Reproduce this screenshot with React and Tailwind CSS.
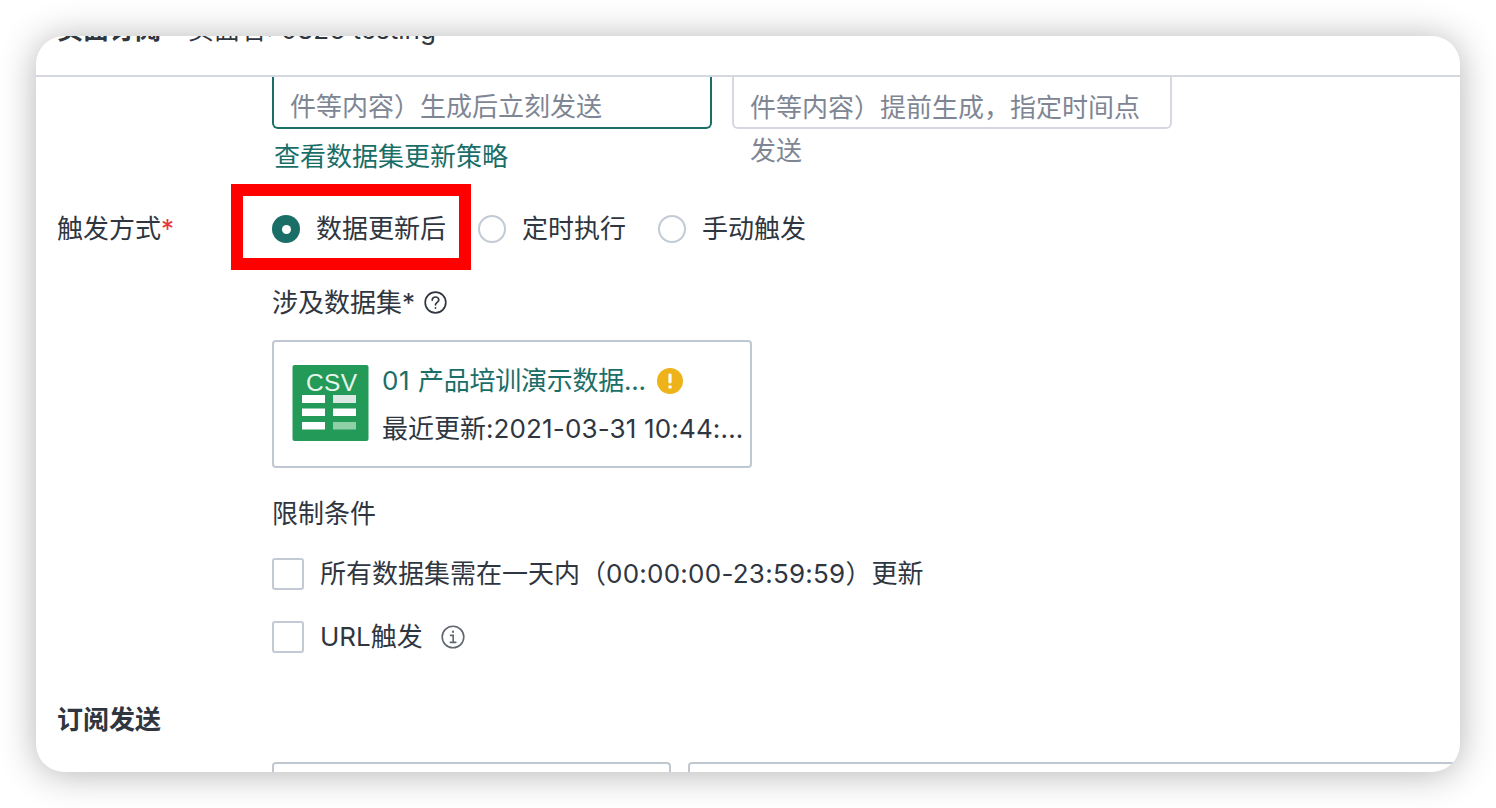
function Radio({ checked, children }) {
  return (
    <label className="flex items-center gap-[16px]">
      {checked ? (
        <span className="flex h-[28px] w-[28px] items-center justify-center rounded-full bg-[#1a6e68]">
          <span className="h-[9px] w-[9px] rounded-full bg-white" />
        </span>
      ) : (
        <span className="h-[28px] w-[28px] rounded-full border-2 border-[#c2cad5] bg-white" />
      )}
      <span className="mr-[1px]">{children}</span>
    </label>
  );
}

function Checkbox({ children }) {
  return (
    <label className="flex items-center gap-[16px]">
      <span className="h-[32px] w-[32px] rounded-[3px] border-2 border-[#c2cad5] bg-white" />
      {children}
    </label>
  );
}

function CsvIcon() {
  return (
    <svg width="77" height="77" viewBox="0 0 77 77" className="shrink-0">
      <rect x="0.5" y="0" width="76" height="76" rx="2" fill="#239a57" />
      <text x="14" y="26" fill="#e6f5ec" fontSize="24.5" fontFamily="Liberation Sans, sans-serif" textLength="51">CSV</text>
      <rect x="10" y="30" width="23" height="8" fill="#fff" />
      <rect x="41" y="30" width="23" height="8" fill="#dce8e3" />
      <rect x="10" y="43.5" width="23" height="7.5" fill="#fff" />
      <rect x="41" y="43.5" width="23" height="7.5" fill="#fff" />
      <rect x="10" y="57" width="23" height="7.5" fill="#fff" />
      <rect x="41" y="57" width="23" height="7.5" fill="#8fd0a8" />
    </svg>
  );
}

function HelpIcon() {
  return (
    <svg width="23" height="23" viewBox="0 0 23 23" fill="none" stroke="#30363f" strokeWidth="1.7" strokeLinecap="round" className="-mt-[2px]">
      <circle cx="11.5" cy="11.5" r="10.3" />
      <path d="M8.2 9.1c0-1.9 1.4-3.1 3.3-3.1s3.3 1.2 3.3 2.9c0 2.4-3.3 2.5-3.3 4.9" />
      <path d="M11.5 16.8v.3" />
    </svg>
  );
}

function InfoIcon() {
  return (
    <svg width="24" height="24" viewBox="0 0 24 24" fill="none" stroke="#5f6670" strokeWidth="1.6" strokeLinecap="round" className="ml-[2px] -mt-[1px]">
      <circle cx="12" cy="12" r="10.8" />
      <path d="M12 6.6v.4" strokeWidth="2" />
      <path d="M9.6 10.4H12.2V17M9.4 17.4h5.4" />
    </svg>
  );
}

function WarnIcon() {
  return (
    <svg width="26" height="26" viewBox="0 0 26 26" className="shrink-0">
      <circle cx="13" cy="13" r="13" fill="#eeb31a" />
      <rect x="11.4" y="5.5" width="3.2" height="10" rx="1.4" fill="#fff" />
      <circle cx="13" cy="19" r="1.8" fill="#fff" />
    </svg>
  );
}

export default function App() {
  return (
    <div
      className="relative h-[808px] w-[1496px] overflow-hidden bg-white p-[36px] text-[26px] leading-[36px] text-[#30363f]"
      style={{ fontFamily: '"Inter", "Noto Sans CJK SC", sans-serif' }}
    >
      <div className="h-[736px] w-[1424px] overflow-hidden rounded-[28px] bg-white shadow-[0_2px_36px_rgba(0,0,0,0.3)]">
        <div className="flex h-[41px] flex-col border-b-2 border-[#d5d9df] pl-[21px]">
          <div className="-mt-[24px] flex gap-[27px]">
            <span className="font-bold">页面订阅</span>
            <span>页面名: 0826 testing</span>
          </div>
        </div>

        <div className="pl-[21px]">
          <div className="pl-[215px]">
            <div className="flex gap-[20px]">
              <div className="h-[52px] w-[440px] rounded-b-[6px] border-x-2 border-b-2 border-[#1a6e68] pl-[16px] pt-[12px] text-[#7e8694]">
                件等内容）生成后立刻发送
              </div>
              <div className="h-[52px] w-[440px] rounded-b-[6px] border-x-2 border-b-2 border-[#d5d9df] pl-[16px] pt-[12px] leading-[43px] text-[#7e8694]">
                <p className="-mt-[3px] w-[400px]">件等内容）提前生成，指定时间点发送</p>
              </div>
            </div>
            <a className="mt-[10px] ml-[2px] block text-[#1a6e68]">查看数据集更新策略</a>
          </div>

          <div className="mt-[36px] flex items-center">
            <div className="w-[215px]">
              触发方式<span className="text-[#e8353b]">*</span>
            </div>
            <div className="flex gap-[31px]">
              <Radio checked>数据更新后</Radio>
              <Radio>定时执行</Radio>
              <Radio>手动触发</Radio>
            </div>
          </div>

          <div className="pl-[215px]">
            <div className="mt-[38px] flex items-center gap-[9px]">
              <span>涉及数据集*</span>
              <HelpIcon />
            </div>

            <div className="mt-[19px] flex h-[128px] w-[480px] items-center gap-[13px] rounded-[4px] border-2 border-[#bfc7d1] pl-[18px]">
              <div className="-mt-[2px]">
                <CsvIcon />
              </div>
              <div className="mt-[2px] min-w-0">
                <div className="flex items-center gap-[11px] text-[#1a6e68]">
                  <span>
                    <span className="tracking-[0.6px]">01 </span>
                    <span className="tracking-[-0.25px]">产品培训演示数据...</span>
                  </span>
                  <WarnIcon />
                </div>
                <div className="mt-[12px] whitespace-nowrap">
                  最近更新:<span className="tracking-[0.16px]">2021-03-31 10:44:...</span>
                </div>
              </div>
            </div>

            <div className="mt-[28px]">限制条件</div>

            <div className="mt-[24px]">
              <Checkbox>
                <span>
                  所有数据集需在一天内（<span className="tracking-[0.25px]">00:00:00-23:59:59</span>）更新
                </span>
              </Checkbox>
            </div>
            <div className="mt-[27px]">
              <Checkbox>
                <span>URL触发</span>
                <InfoIcon />
              </Checkbox>
            </div>
          </div>

          <div className="mt-[47px] font-bold">订阅发送</div>

          <div className="mt-[24px] flex gap-[17px] pl-[215px]">
            <div className="h-[40px] w-[399px] shrink-0 rounded-t-[4px] border-x-2 border-t-2 border-[#bfc7d1]" />
            <div className="h-[40px] w-[800px] shrink-0 rounded-t-[4px] border-x-2 border-t-2 border-[#bfc7d1]" />
          </div>
        </div>
      </div>

      {/* red annotation box drawn over the screenshot */}
      <div className="absolute left-[231px] top-[184px] h-[86px] w-[240px] border-x-[12px] border-y-[12.5px] border-[#ff0000]" />
    </div>
  );
}
